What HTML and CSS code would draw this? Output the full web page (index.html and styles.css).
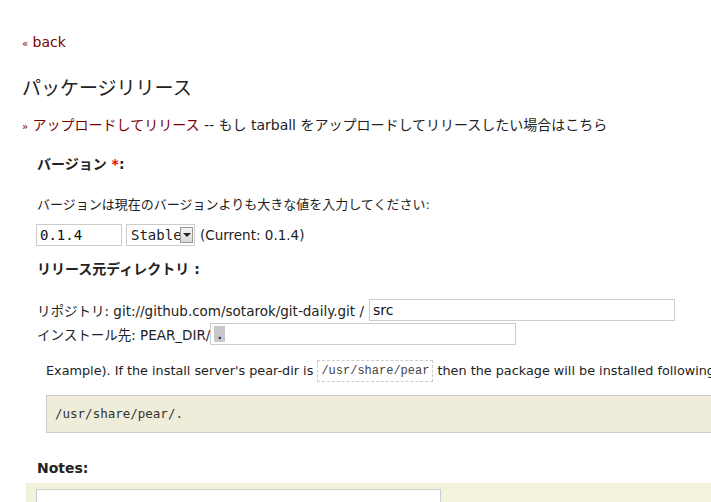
FILE: index.html
```html
<!DOCTYPE html>
<html lang="ja">

<head>
  <meta charset="UTF-8">
  <title>パッケージリリース</title>
  <link rel="stylesheet" href="styles.css">
</head>

<body>

  <p class="back"><span class="raquo">&laquo;</span> <a href="#">back</a></p>

  <h2>パッケージリリース</h2>

  <p class="upload"><span class="raquo">&raquo;</span> <a href="#">アップロードしてリリース</a> -- もし tarball をアップロードしてリリースしたい場合はこちら</p>

  <form class="release-form">
    <div class="label">バージョン <span class="required">*</span>:</div>
    <p class="hint">バージョンは現在のバージョンよりも大きな値を入力してください:</p>

    <div class="row version-row">
      <input type="text" class="text-input mono version-input" value="0.1.4">
      <span class="select-box">
        <span class="select-text">Stable</span>
        <span class="select-arrow"></span>
      </span>
      <span>(Current: 0.1.4)</span>
    </div>

    <div class="label dir-label">リリース元ディレクトリ :</div>

    <div class="row repo-row">
      <span>リポジトリ: git://github.com/sotarok/git-daily.git /</span><input type="text" class="text-input path-input repo-input" value="src">
    </div>
    <div class="row install-row">
      <span>インストール先: PEAR_DIR/</span><span class="text-input path-input fake-input"><span class="selected">.</span></span>
    </div>

    <div class="example">
      <p class="example-text">Example). If the install server's pear-dir is <code>/usr/share/pear</code> then the package will be installed following directory.</p>
      <pre>/usr/share/pear/.</pre>
    </div>

    <div class="label notes-label">Notes:</div>
    <div class="notes-box">
      <textarea class="notes"></textarea>
    </div>
  </form>

</body>

</html>
```

FILE: styles.css
```css
html {
  overflow: hidden;
}

body {
  margin: 0;
  padding: 33px 22px 0;
  font-family: "DejaVu Sans", "Noto Sans CJK JP", sans-serif;
  font-size: 13px;
  color: #222;
  background-color: #fff;
}

a {
  color: #7a0000;
  text-decoration: none;
}

.raquo {
  color: #7a0000;
  font-size: 10px;
}

.back {
  margin: 0;
  font-size: 14px;
  line-height: 18px;
}

h2 {
  margin: 23px 0 0;
  font-size: 19px;
  font-weight: normal;
  line-height: 24px;
  color: #222;
}

.upload {
  margin: 16px 0 0;
  font-size: 14px;
  line-height: 18px;
  white-space: nowrap;
}

.release-form {
  padding-left: 15px;
}

.label {
  margin-top: 19px;
  font-size: 14px;
  font-weight: bold;
  line-height: 18px;
}

.required {
  color: #e00;
}

.hint {
  margin: 23px 0 0;
  font-size: 13px;
  line-height: 18px;
}

.row {
  display: flex;
  align-items: center;
  height: 22px;
  font-size: 13.5px;
  white-space: nowrap;
}

.version-row {
  margin-top: 10px;
  gap: 4px;
}

.text-input {
  box-sizing: border-box;
  height: 22px;
  margin: 0;
  padding: 0 3px;
  border: 1px solid #ccc;
  font-family: "DejaVu Sans", sans-serif;
  font-size: 14px;
  color: #111;
  background: #fff;
  outline: none;
}

.mono {
  font-family: "DejaVu Sans Mono", monospace;
}

.version-input {
  width: 86px;
  margin-left: -1px;
}

.select-box {
  position: relative;
  box-sizing: border-box;
  display: inline-flex;
  align-items: center;
  width: 69px;
  height: 22px;
  padding-left: 4px;
  border: 1px solid #ccc;
  font-family: "DejaVu Sans Mono", monospace;
  font-size: 14px;
  margin-right: 1px;
}

.select-arrow {
  position: absolute;
  right: 1px;
  top: 2px;
  width: 13px;
  height: 16px;
  border: 1px solid #999;
  box-sizing: border-box;
  background: linear-gradient(#f4f4f4, #d8d8d8);
}

.select-arrow::after {
  content: "";
  position: absolute;
  left: 2px;
  top: 5px;
  border-left: 4px solid transparent;
  border-right: 4px solid transparent;
  border-top: 4px solid #222;
}

.dir-label {
  margin-top: 14px;
}

.repo-row {
  margin-top: 21px;
}

.repo-input {
  margin-left: 5px;
}

.install-row {
  margin-top: 2px;
}

.path-input {
  width: 306px;
}

.fake-input {
  display: inline-flex;
  align-items: center;
  font-family: "DejaVu Sans Mono", monospace;
}

.selected {
  background: #c8c8c8;
  padding: 0 1px;
}

.example {
  margin-top: 15px;
  margin-left: 9px;
}

.example-text {
  margin: 0;
  line-height: 22px;
  font-size: 12.8px;
  white-space: nowrap;
}

code {
  display: inline-block;
  box-sizing: border-box;
  height: 22px;
  padding: 0 3px;
  border: 1px dashed #ccc;
  font-family: "Liberation Mono", monospace;
  font-size: 12px;
  line-height: 20px;
  color: #444;
  vertical-align: top;
}

pre {
  box-sizing: border-box;
  width: 900px;
  height: 38px;
  margin: 13px 0 0;
  padding: 0 8px;
  border: 1px solid #ccc;
  background-color: #efedda;
  font-family: "DejaVu Sans Mono", monospace;
  font-size: 12.5px;
  line-height: 36px;
  color: #333;
}

.notes-label {
  margin-top: 26px;
}

.notes-box {
  width: 900px;
  margin: 6px 0 0 -11px;
  padding: 6px 10px 20px;
  background-color: #f3f2dc;
}

.notes {
  display: block;
  box-sizing: border-box;
  width: 405px;
  height: 80px;
  border: 1px solid #ccc;
  background: #fff;
  resize: none;
}
```
